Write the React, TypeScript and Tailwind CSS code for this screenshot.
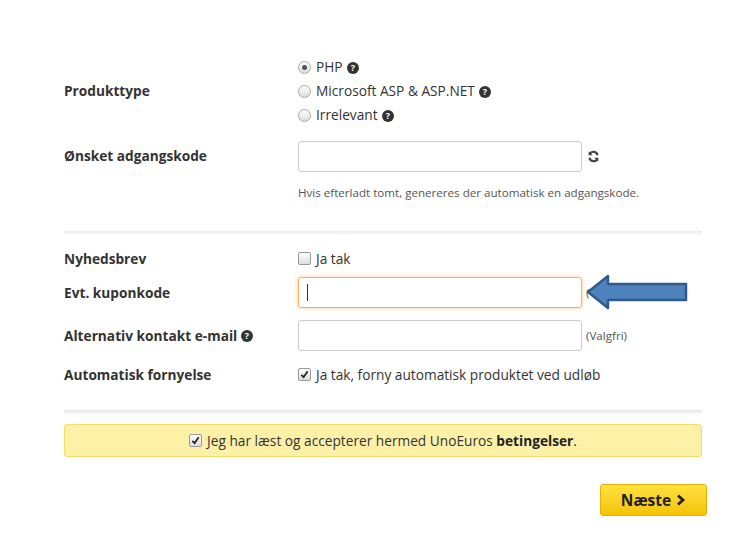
import React from "react";

const Q = () => (
  <svg width="12" height="12" viewBox="0 0 12 12" className="inline-block ml-1 align-[-1px]">
    <circle cx="6" cy="6" r="6" fill="#333" />
    <text x="6" y="9.3" textAnchor="middle" fontSize="9" fontWeight="700" fill="#fff" fontFamily="Open Sans">?</text>
  </svg>
);

const Radio = ({ on }: { on?: boolean }) => (
  <span className="inline-flex w-[13px] h-[13px] rounded-full border border-[#aaa] bg-gradient-to-b from-[#fff] to-[#ddd] items-center justify-center mr-[5px]">
    {on && <span className="w-[5px] h-[5px] rounded-full bg-[#555]" />}
  </span>
);

const Check = ({ on }: { on?: boolean }) => (
  <span className="inline-flex w-[13px] h-[13px] rounded-[2px] border border-[#999] bg-gradient-to-b from-[#fff] to-[#ddd] items-center justify-center mr-[5px]">
    {on && (
      <svg width="9" height="9" viewBox="0 0 10 10"><path d="M1.5 5.5 L4 8 L8.5 1.5" stroke="#222" strokeWidth="2" fill="none" /></svg>
    )}
  </span>
);

export default function App() {
  return (
    <div className="relative w-[744px] h-[545px] bg-white text-[#333] text-[13.7px]" style={{ fontFamily: "'Open Sans', sans-serif" }}>
      <div className="absolute left-0 top-0 w-full">
        <div className="pl-[64px] pr-[42px]">
          <div className="pt-[58px] flex items-center">
            <div className="w-[234px] font-bold">Produkttype</div>
            <div className="flex flex-col gap-[5px]">
              <div className="flex items-center h-[19px]"><Radio on />PHP<Q /></div>
              <div className="flex items-center h-[19px]"><Radio />Microsoft ASP &amp; ASP.NET<Q /></div>
              <div className="flex items-center h-[19px]"><Radio />Irrelevant<Q /></div>
            </div>
          </div>
          <div className="mt-[16px] flex items-center">
            <div className="w-[234px] font-bold">Ønsket adgangskode</div>
            <div className="w-[284px] h-[31px] border border-[#ccc] rounded-[3px]" />
            <svg width="13" height="13" viewBox="0 0 16 16" className="ml-[5px]">
              <path d="M13 6.5A5.2 5.2 0 0 0 3.3 5" stroke="#444" strokeWidth="2.6" fill="none" />
              <path d="M2 1.5v5h5z" fill="#444" />
              <path d="M3 9.5A5.2 5.2 0 0 0 12.7 11" stroke="#444" strokeWidth="2.6" fill="none" />
              <path d="M14 14.5v-5H9z" fill="#444" />
            </svg>
          </div>
          <div className="ml-[234px] mt-[12px] text-[11.6px] text-[#555]">Hvis efterladt tomt, genereres der automatisk en adgangskode.</div>
          <div className="mt-[30px] h-[5px] bg-gradient-to-b from-[#ececec] to-white" />
          <div className="mt-[13px] flex items-center h-[19px]">
            <div className="w-[234px] font-bold">Nyhedsbrev</div>
            <div className="flex items-center"><Check />Ja tak</div>
          </div>
          <div className="mt-[9px] flex items-center">
            <div className="w-[234px] font-bold">Evt. kuponkode</div>
            <div className="w-[284px] h-[31px] border border-[#f5b25a] rounded-[3px] shadow-[0_0_4px_rgba(245,170,70,0.6)] flex items-center pl-[8px]">
              <span className="w-px h-[17px] bg-[#333]" />
            </div>
            <span className="ml-[4px] text-[11.6px] text-[#555]">(Valgfri)</span>
          </div>
          <div className="mt-[12px] flex items-center">
            <div className="w-[234px] font-bold flex items-center">Alternativ kontakt e-mail<Q /></div>
            <div className="w-[284px] h-[31px] border border-[#ccc] rounded-[3px]" />
            <span className="ml-[4px] text-[11.6px] text-[#555]">(Valgfri)</span>
          </div>
          <div className="mt-[14px] flex items-center h-[19px]">
            <div className="w-[234px] font-bold">Automatisk fornyelse</div>
            <div className="flex items-center"><Check on />Ja tak, forny automatisk produktet ved udløb</div>
          </div>
          <div className="mt-[26px] h-[5px] bg-gradient-to-b from-[#e6e6e6] to-white" />
          <div className="mt-[9px] h-[33px] bg-[#fdf1a8] border border-[#f8dc6a] rounded-[3px] flex items-center justify-center">
            <Check on />Jeg har læst og accepterer hermed UnoEuros&nbsp;<b className="text-[#222]">betingelser</b>.
          </div>
          <div className="mt-[27px] flex justify-end">
            <div className="mr-[-5px] w-[107px] h-[32px] rounded-[3px] border border-[#e8b000] bg-gradient-to-b from-[#ffe13a] to-[#f6c300] flex items-center justify-center font-bold text-[15.5px] text-[#222]">
              Næste
              <svg width="10" height="12" viewBox="0 0 10 12" className="ml-[5px]"><path d="M2 1.5 L7 6 L2 10.5" stroke="#222" strokeWidth="2.8" fill="none" /></svg>
            </div>
          </div>
        </div>
      </div>
      <svg className="absolute left-[586px] top-[274px]" width="104" height="36" viewBox="0 0 104 36">
        <path d="M2 18 L22 2 L22 10 L100 10 L100 26 L22 26 L22 34 Z" fill="#4f81bd" stroke="#2f5a8a" strokeWidth="2.5" strokeLinejoin="round" />
      </svg>
    </div>
  );
}
